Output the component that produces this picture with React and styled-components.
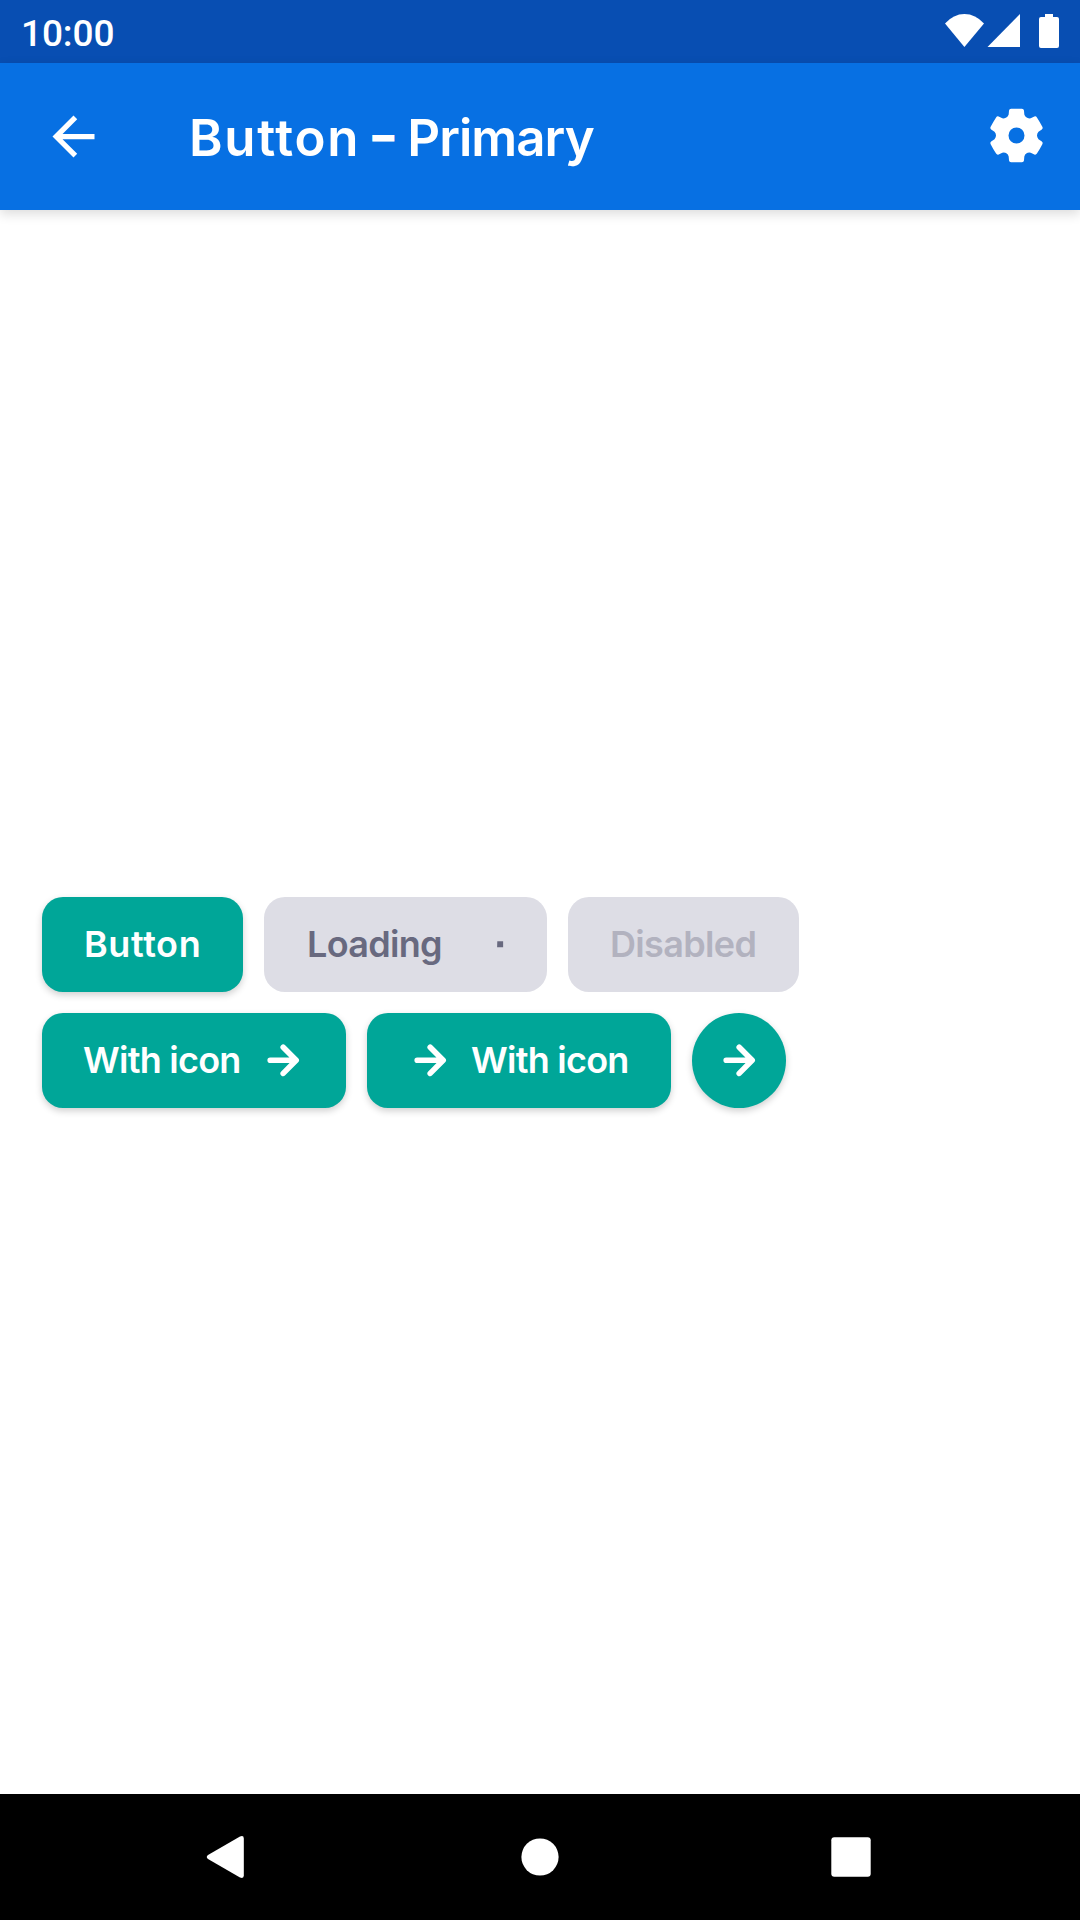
import React from 'react';
import styled, { createGlobalStyle } from 'styled-components';

const GlobalStyle = createGlobalStyle`
  * { box-sizing: border-box; }
  body { margin: 0; background: #fff; }
`;

const Screen = styled.div`
  display: flex;
  flex-direction: column;
  width: 1080px;
  height: 1920px;
  overflow: hidden;
  background: #fff;
  font-family: Inter, "Liberation Sans", sans-serif;
`;

const StatusBar = styled.header`
  display: flex;
  align-items: flex-start;
  justify-content: space-between;
  flex: none;
  height: 63px;
  padding: 13px 21px 0;
  background: #084eb2;
  color: #fff;
`;

const Clock = styled.time`
  font: 500 37px/42px Roboto, sans-serif;
  letter-spacing: -0.1px;
`;

const StatusIcons = styled.svg`
  display: block;
  width: 114px;
  height: 36px;
  fill: #fff;
`;

const AppBar = styled.nav`
  display: flex;
  align-items: center;
  flex: none;
  height: 147px;
  padding: 0 32px 0 42px;
  background: #0770e3;
  color: #fff;
  box-shadow: 0 4px 11px rgba(0, 0, 0, 0.14);
`;

const IconButton = styled.button`
  display: flex;
  padding: 0;
  border: 0;
  background: none;
  color: inherit;
`;

const AppIcon = styled.svg`
  display: block;
  width: 63px;
  height: 63px;
  fill: currentColor;
`;

const Title = styled.h1`
  flex: 1;
  margin: 0 0 0 84px;
  padding-top: 2px;
  font-size: 51px;
  line-height: 60px;
  font-weight: 600;
  white-space: nowrap;
`;

const Word = styled.span`
  font-size: ${(p) => p.$size || 51}px;
  line-height: 1;
  font-weight: ${(p) => p.$weight || 600};
  letter-spacing: ${(p) => p.$tracking}px;
  word-spacing: ${(p) => p.$gap || 0}px;
  vertical-align: ${(p) => p.$raise || 0}px;
`;

const Content = styled.main`
  display: flex;
  flex: 1;
  flex-direction: column;
  justify-content: center;
  gap: 21px;
  padding: 1px 42px 0;
`;

const ButtonRow = styled.div`
  display: flex;
  gap: 21px;
`;

const palette = {
  primary: ['#00a698', '#fff'],
  loading: ['#dddde5', '#68697f'],
  disabled: ['#dddde5', '#b2b2bf'],
};

const Button = styled.button`
  display: flex;
  align-items: center;
  justify-content: ${(p) => (p.$round ? 'center' : 'flex-start')};
  gap: 21px;
  width: ${(p) => (p.$round ? '94px' : 'auto')};
  height: 95px;
  padding: ${(p) => (p.$round ? '0 0 1px' : '0 42px 1px')};
  border: 0;
  border-radius: ${(p) => (p.$round ? '50%' : '21px')};
  background: ${(p) => palette[p.$kind || 'primary'][0]};
  color: ${(p) => palette[p.$kind || 'primary'][1]};
  box-shadow: ${(p) => (p.$kind ? 'none' : '0 3px 7px rgba(0, 0, 0, 0.19)')};
  font-family: inherit;
`;

const Label = styled.span`
  width: ${(p) => p.$width}px;
  padding-bottom: 1px;
  font-size: 36px;
  line-height: 48px;
  font-weight: 600;
  letter-spacing: ${(p) => p.$tracking || 0}px;
  text-indent: ${(p) => p.$indent || 0}px;
  text-align: left;
  white-space: nowrap;
`;

const SmallIcon = styled.svg`
  display: block;
  flex: none;
  width: 42px;
  height: 42px;
`;

const NavBar = styled.footer`
  display: grid;
  grid-template-columns: 312px 312px 312px;
  justify-content: center;
  align-items: center;
  justify-items: center;
  flex: none;
  height: 126px;
  background: #000;
`;

const NavIcon = styled.svg`
  display: block;
  width: 48px;
  height: 48px;
  fill: #fff;
`;

const Arrow = () => (
  <SmallIcon viewBox="0 0 42 42" fill="none" stroke="currentColor" strokeWidth="5.6" strokeLinecap="round" strokeLinejoin="round">
    <path d="M8.2 21.3H34M21.2 8.2L34.2 21.3L21.2 34.4" />
  </SmallIcon>
);

const LoadingDot = () => (
  <SmallIcon viewBox="0 0 42 42" fill="currentColor">
    <path d="M34.3 18.2H40.1V24.2H34.1Z" />
  </SmallIcon>
);

// One tooth gap of the cog, repeated every 60 degrees and joined by the outer edge.
const cogPath = (() => {
  const at = (x, y, k) => {
    const a = (k * Math.PI) / 3;
    const px = x * Math.cos(a) - y * Math.sin(a);
    const py = x * Math.sin(a) + y * Math.cos(a);
    return `${px.toFixed(2)} ${py.toFixed(2)}`;
  };
  let d = `M${at(-66, 11, 0)}`;
  for (let k = 0; k < 6; k += 1) {
    d += `Q${at(-57, 0, k)} ${at(-66, -11, k)}L${at(-76, -18, k)}`;
    d += `Q${at(-80, -21, k)} ${at(-77.5, -26, k)}`;
    d += `Q${at(-70.1, -40.5, k)} ${at(-77.5, 26, k + 1)}`;
    d += `Q${at(-80, 21, k + 1)} ${at(-76, 18, k + 1)}L${at(-66, 11, k + 1)}`;
  }
  return `${d}ZM-24 0A24 24 0 1 0 24 0A24 24 0 1 0 -24 0Z`;
})();

export default function App() {
  return (
    <Screen>
      <GlobalStyle />
      <StatusBar>
        <Clock>10:00</Clock>
        <StatusIcons viewBox="0 0 114 36">
          <path d="M0 10.5Q8.500 1 19.400 1Q30.500 1 39 10.500L19.400 34Z" />
          <path d="M42.500 34L75 1V34Z" />
          <path d="M100 1H108V4H112Q114 4 114 6V33Q114 35 112 35H96Q94 35 94 33V6Q94 4 96 4H100Z" />
        </StatusIcons>
      </StatusBar>
      <AppBar>
        <IconButton aria-label="Back">
          <AppIcon viewBox="0 0 24 24">
            <path d="M20 11H7.830l5.590-5.590L12 4l-8 8 8 8 1.410-1.410L7.830 13H20v-2z" />
          </AppIcon>
        </IconButton>
        <Title>
          <Word $tracking={1.7} $gap={-2.5}>Button </Word>
          <Word $tracking={1} $size={44} $weight={900} $raise={5}>–</Word>
          <Word $tracking={-0.95}> Primary</Word>
        </Title>
        <IconButton aria-label="Settings">
          <AppIcon viewBox="-94.500 -91.500 189 189">
            <path fillRule="evenodd" d={cogPath} />
          </AppIcon>
        </IconButton>
      </AppBar>
      <Content>
        <ButtonRow>
          <Button><Label $width={117} $tracking={0.6}>Button</Label></Button>
          <Button $kind="loading"><Label $width={136} $tracking={-0.7} $indent={1}>Loading</Label><LoadingDot /></Button>
          <Button $kind="disabled"><Label $width={147} $tracking={-0.65}>Disabled</Label></Button>
        </ButtonRow>
        <ButtonRow>
          <Button><Label $width={157} $tracking={-0.75} $indent={-1}>With icon</Label><Arrow /></Button>
          <Button><Arrow /><Label $width={157} $tracking={-0.75} $indent={-1}>With icon</Label></Button>
          <Button $round aria-label="Next"><Arrow /></Button>
        </ButtonRow>
      </Content>
      <NavBar>
        <NavIcon viewBox="0 0 48 48">
          <path d="M4 22L36 3.500Q39.800 2 39.800 5.500V42.500Q39.800 46 36 44.500L4 26Q1.500 24 4 22Z" />
        </NavIcon>
        <NavIcon viewBox="0 0 48 48"><circle cx="24" cy="24" r="18.600" /></NavIcon>
        <NavIcon viewBox="0 0 48 48"><rect x="3.300" y="4.200" width="39.400" height="39.600" rx="3" /></NavIcon>
      </NavBar>
    </Screen>
  );
}
